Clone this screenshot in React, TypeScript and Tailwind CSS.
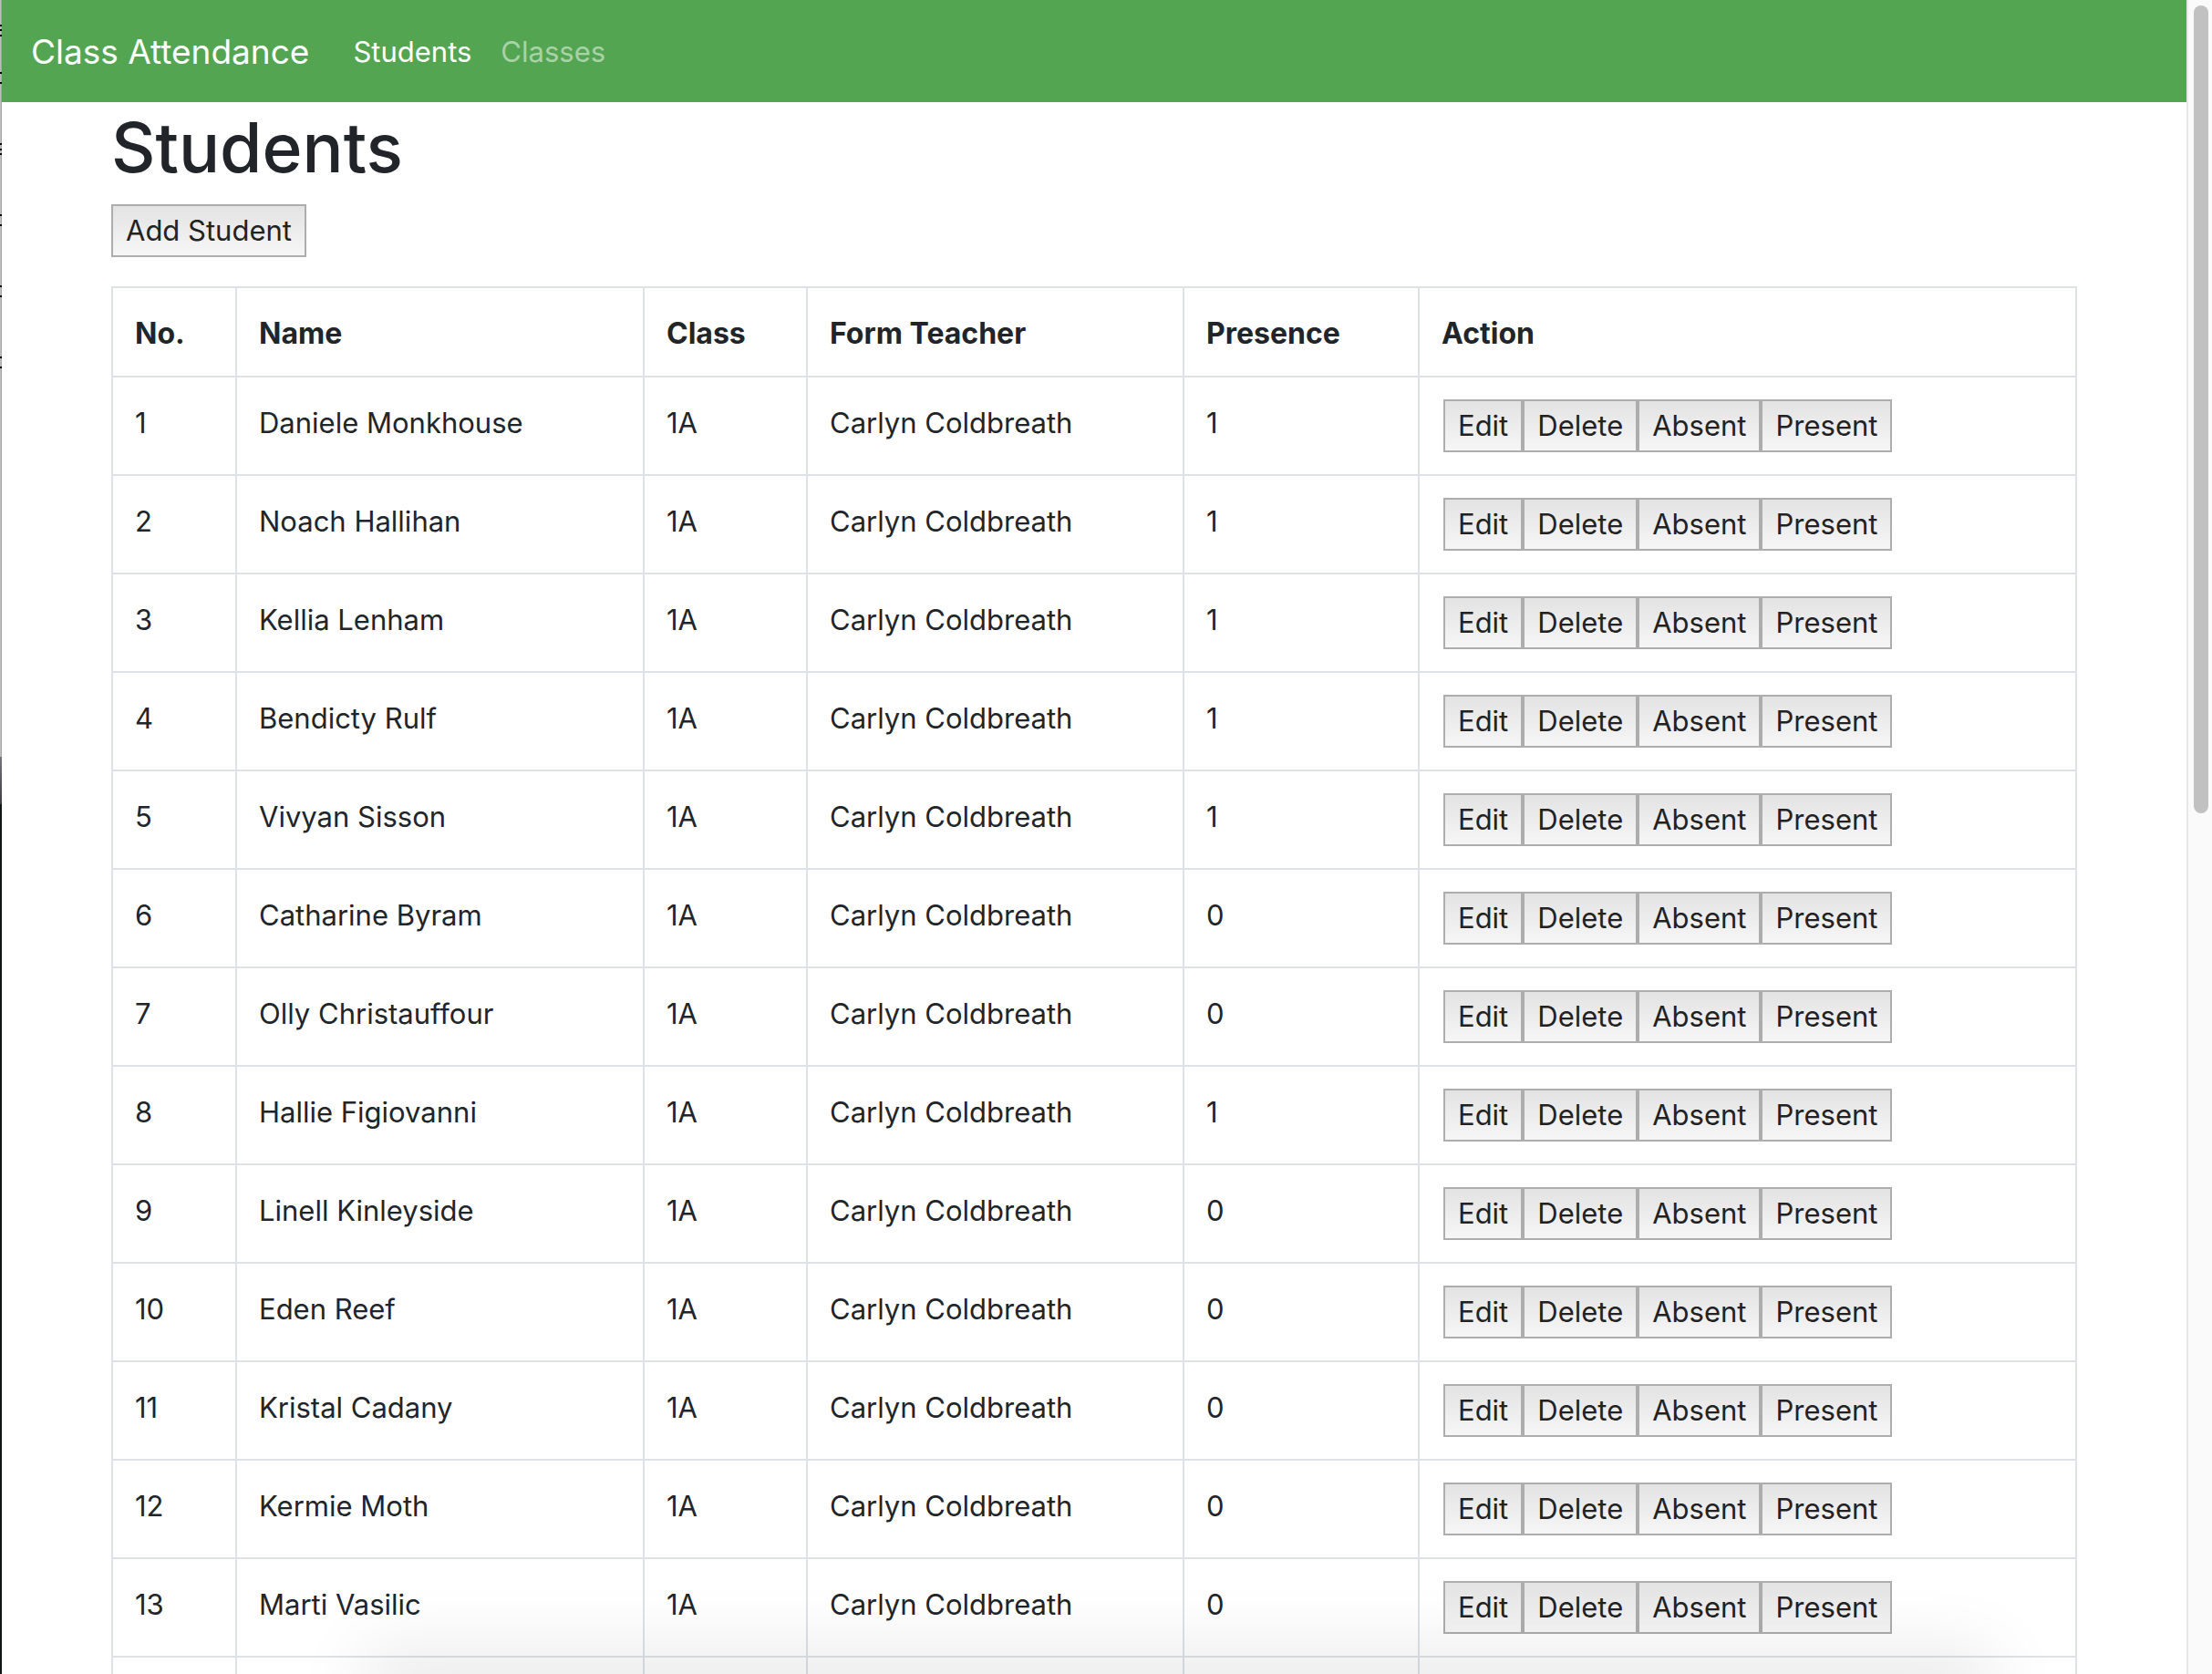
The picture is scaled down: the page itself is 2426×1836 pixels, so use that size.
const students: { name: string; presence: number }[] = [
  { name: "Daniele Monkhouse", presence: 1 },
  { name: "Noach Hallihan", presence: 1 },
  { name: "Kellia Lenham", presence: 1 },
  { name: "Bendicty Rulf", presence: 1 },
  { name: "Vivyan Sisson", presence: 1 },
  { name: "Catharine Byram", presence: 0 },
  { name: "Olly Christauffour", presence: 0 },
  { name: "Hallie Figiovanni", presence: 1 },
  { name: "Linell Kinleyside", presence: 0 },
  { name: "Eden Reef", presence: 0 },
  { name: "Kristal Cadany", presence: 0 },
  { name: "Kermie Moth", presence: 0 },
  { name: "Marti Vasilic", presence: 0 },
];

const columns = ["No.", "Name", "Class", "Form Teacher", "Presence", "Action"];
const actions = ["Edit", "Delete", "Absent", "Present"];
const marks = [27, 32, 38, 79, 90, 157, 163, 168, 235, 246, 313, 324, 391, 402];

const textCell = "border-2 border-[#dee2e6] px-6 pt-[26px] pb-[22px] whitespace-nowrap";

function PlainButton({ children }: { children: string }) {
  return (
    <button
      type="button"
      className="h-[58px] border-2 border-[#adadad] bg-linear-to-b from-[#e3e3e3] to-[#f6f6f6] px-3.5 whitespace-nowrap text-[#222]"
    >
      {children}
    </button>
  );
}

/* Sliver of the window that lies behind the browser's left edge. */
function BackgroundSliver() {
  return (
    <div className="flex w-[2px] shrink-0 flex-col bg-[#101412]">
      <svg className="h-[830px] w-[2px] shrink-0" viewBox="0 0 2 830" aria-hidden="true">
        <rect width="2" height="830" fill="#bdbdbd" />
        <rect x="1" width="1" height="830" fill="#a6a6a6" />
        {marks.map((y) => (
          <rect key={y} y={y} width="2" height="2" fill="#000" />
        ))}
      </svg>
      <div className="h-[52px] shrink-0 bg-linear-to-b from-[#74767c] to-[#3c3e42]" />
    </div>
  );
}

export default function App() {
  return (
    <div className="relative flex h-screen overflow-hidden bg-white font-[Inter,sans-serif] text-[31px] leading-[48px] text-[#212529]">
      <BackgroundSliver />
      <div className="min-w-0 flex-1 overflow-hidden">
        <nav className="flex h-28 items-center bg-[#53a551] px-8 pt-0.5 text-white">
          <a href="#" className="mr-8 text-[37px]">
            Class Attendance
          </a>
          <a href="#students" className="px-4">
            Students
          </a>
          <a href="#classes" className="px-4 text-white/50">
            Classes
          </a>
        </nav>
        <main className="px-[120px]">
          <h1 className="mb-3.5 pt-0.5 text-[75px] leading-[96px] font-medium">Students</h1>
          <div className="mb-8 flex">
            <PlainButton>Add Student</PlainButton>
          </div>
          <table className="w-full table-fixed border-collapse text-left">
            <colgroup>
              <col className="w-[136px]" />
              <col className="w-[447px]" />
              <col className="w-[179px]" />
              <col className="w-[413px]" />
              <col className="w-[258px]" />
              <col />
            </colgroup>
            <thead className="text-[32px]">
              <tr>
                {columns.map((c) => (
                  <th key={c} scope="col" className={`${textCell} font-bold`}>
                    {c}
                  </th>
                ))}
              </tr>
            </thead>
            <tbody>
              {students.map((s, i) => (
                <tr key={s.name} className="align-top">
                  <td className={textCell}>{i + 1}</td>
                  <td className={textCell}>{s.name}</td>
                  <td className={textCell}>1A</td>
                  <td className={textCell}>Carlyn Coldbreath</td>
                  <td className={textCell}>{s.presence}</td>
                  <td className="border-2 border-[#dee2e6] p-6">
                    <div className="flex pl-0.5">
                      {actions.map((a) => (
                        <PlainButton key={a}>{a}</PlainButton>
                      ))}
                    </div>
                  </td>
                </tr>
              ))}
              <tr className="h-[108px]">
                {columns.map((c) => (
                  <td key={c} className="border-2 border-[#dee2e6]" />
                ))}
              </tr>
            </tbody>
          </table>
        </main>
      </div>
      <div className="w-7 shrink-0 border-l-2 border-[#e8e8e8] bg-[#fafafa] pt-1.5 pr-1 pl-1.5">
        <div className="h-[886px] w-4 rounded-full bg-[#c1c1c1]" />
      </div>
      <div className="pointer-events-none absolute inset-x-0 bottom-0 pr-[280px] pl-[440px]">
        <div className="h-0 shadow-[0_14px_80px_40px_rgba(0,0,0,0.09)]" />
      </div>
    </div>
  );
}
